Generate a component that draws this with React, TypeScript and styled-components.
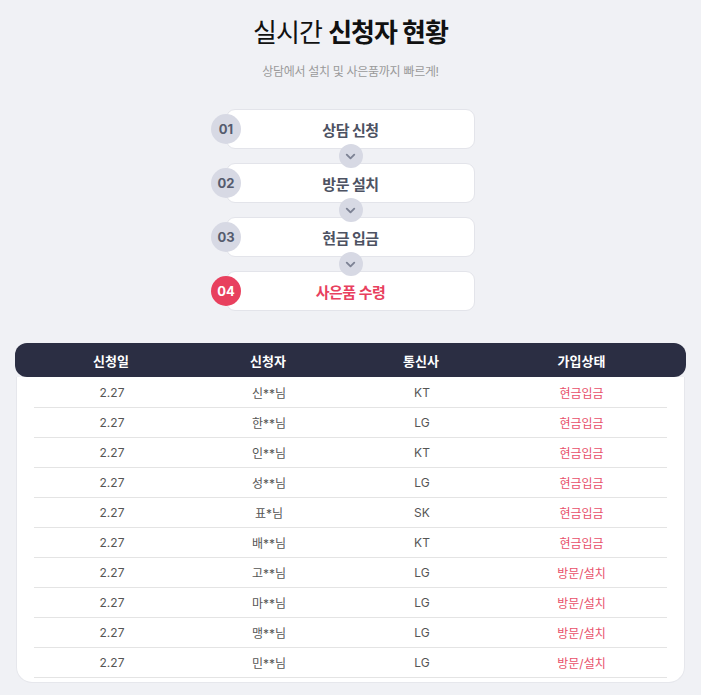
import React from 'react';
import styled, { createGlobalStyle } from 'styled-components';

const GlobalStyle = createGlobalStyle`
  html, body {
    margin: 0;
    padding: 0;
    background: #f0f1f5;
  }
  body {
    font-family: Inter, "Noto Sans CJK KR", sans-serif;
    color: #333;
  }
`;

const Page = styled.div`
  display: flex;
  flex-direction: column;
  align-items: center;
  padding: 16px 15px 13px;
`;

const Title = styled.h1`
  margin: 0;
  font-size: 26px;
  line-height: 34px;
  font-weight: 400;
  letter-spacing: -1px;
  color: #111;
  b {
    font-weight: 700;
  }
`;

const Sub = styled.p`
  margin: 14px 0 0;
  font-size: 12px;
  line-height: 16px;
  color: #9a9a9a;
  letter-spacing: -0.3px;
`;

const Steps = styled.div`
  display: flex;
  flex-direction: column;
  align-items: center;
  margin-top: 29px;
`;

const Step = styled.div`
  position: relative;
  width: 249px;
  height: 40px;
  box-sizing: border-box;
  background: #fff;
  border: 1px solid #e3e4ea;
  border-radius: 9px;
  display: flex;
  align-items: center;
  justify-content: center;
`;

const Num = styled.span<{ $active?: boolean }>`
  position: absolute;
  left: -16px;
  top: 4px;
  width: 30px;
  height: 30px;
  border-radius: 50%;
  display: flex;
  align-items: center;
  justify-content: center;
  font-size: 13px;
  font-weight: 700;
  background: ${(p) => (p.$active ? '#e8405e' : '#d7d9e4')};
  color: ${(p) => (p.$active ? '#fff' : '#555b6e')};
`;

const Label = styled.span<{ $active?: boolean }>`
  font-size: 15px;
  font-weight: 700;
  letter-spacing: -0.5px;
  color: ${(p) => (p.$active ? '#e8405e' : '#4d5262')};
`;

const Gap = styled.div`
  position: relative;
  height: 14px;
  width: 100%;
  z-index: 1;
`;

const Chevron = styled.span`
  position: absolute;
  left: 50%;
  top: -5px;
  transform: translateX(-50%);
  width: 24px;
  height: 24px;
  border-radius: 50%;
  background: #d7d9e4;
  display: flex;
  align-items: center;
  justify-content: center;
`;

const Table = styled.div`
  align-self: stretch;
  margin-top: 32px;
`;

const Head = styled.div`
  display: grid;
  grid-template-columns: 156px 158px 148px 1fr;
  height: 34px;
  align-items: center;
  padding: 0 18px;
  background: #2b2e43;
  border-radius: 12px;
  color: #fff;
  font-size: 13px;
  font-weight: 700;
  text-align: center;
`;

const Body = styled.div`
  margin: 0 1px;
  padding: 1px 17px 4px;
  background: #fff;
  border: 1px solid #e6e7ec;
  border-top: none;
  border-radius: 0 0 16px 16px;
`;

const Row = styled.div`
  display: grid;
  grid-template-columns: 156px 158px 148px 1fr;
  height: 30px;
  box-sizing: border-box;
  align-items: center;
  border-bottom: 1px solid #e4e4e4;
  font-size: 12px;
  color: #555;
  text-align: center;
`;

const Status = styled.span`
  color: #e8506b;
`;

const steps = ['상담 신청', '방문 설치', '현금 입금', '사은품 수령'];

const rows = [
  ['신**님', 'KT', '현금입금'],
  ['한**님', 'LG', '현금입금'],
  ['인**님', 'KT', '현금입금'],
  ['성**님', 'LG', '현금입금'],
  ['표*님', 'SK', '현금입금'],
  ['배**님', 'KT', '현금입금'],
  ['고**님', 'LG', '방문/설치'],
  ['마**님', 'LG', '방문/설치'],
  ['맹**님', 'LG', '방문/설치'],
  ['민**님', 'LG', '방문/설치'],
];

export default function App() {
  return (
    <>
      <GlobalStyle />
      <Page>
        <Title>
          실시간 <b>신청자 현황</b>
        </Title>
        <Sub>상담에서 설치 및 사은품까지 빠르게!</Sub>
        <Steps>
          {steps.map((s, i) => {
            const active = i === steps.length - 1;
            return (
              <React.Fragment key={s}>
                {i > 0 && (
                  <Gap>
                    <Chevron>
                      <svg width="15" height="15" viewBox="0 0 24 24" fill="none" stroke="#7d8294" strokeWidth="3" strokeLinecap="round" strokeLinejoin="round">
                        <path d="M6 9l6 6 6-6" />
                      </svg>
                    </Chevron>
                  </Gap>
                )}
                <Step>
                  <Num $active={active}>{String(i + 1).padStart(2, '0')}</Num>
                  <Label $active={active}>{s}</Label>
                </Step>
              </React.Fragment>
            );
          })}
        </Steps>
        <Table>
          <Head>
            <span>신청일</span>
            <span>신청자</span>
            <span>통신사</span>
            <span>가입상태</span>
          </Head>
          <Body>
            {rows.map((r, i) => (
              <Row key={i}>
                <span>2.27</span>
                <span>{r[0]}</span>
                <span>{r[1]}</span>
                <Status>{r[2]}</Status>
              </Row>
            ))}
          </Body>
        </Table>
      </Page>
    </>
  );
}
